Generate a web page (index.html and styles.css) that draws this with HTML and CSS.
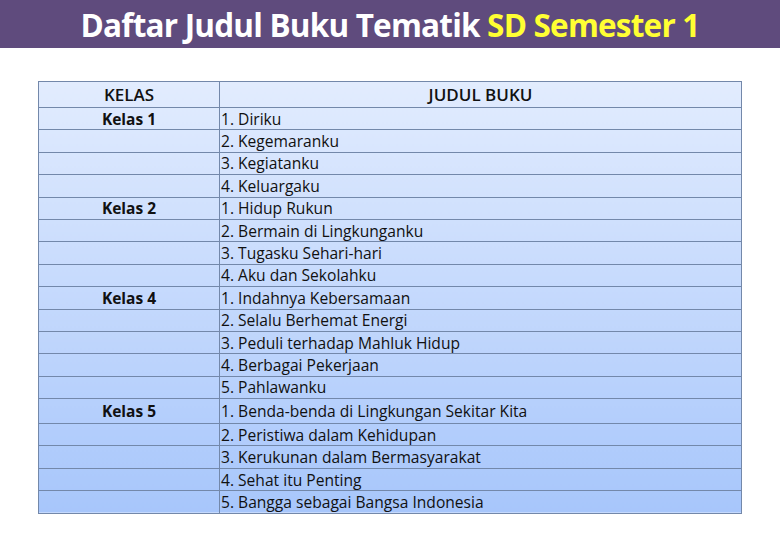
FILE: index.html
```html
<!DOCTYPE html>
<html>
<head>
<meta charset="utf-8">
<link rel="stylesheet" href="styles.css">
</head>
<body>
<header class="title-bar">
  <h1 class="title">Daftar Judul Buku Tematik <span class="accent">SD Semester 1</span></h1>
</header>
<main class="content">
  <table class="book-table">
    <thead>
      <tr class="head-row"><th class="col-kelas">KELAS</th><th class="col-judul">JUDUL BUKU</th></tr>
    </thead>
    <tbody>
      <tr><td class="kelas">Kelas 1</td><td>1. Diriku</td></tr>
      <tr><td class="kelas"></td><td>2. Kegemaranku</td></tr>
      <tr><td class="kelas"></td><td>3. Kegiatanku</td></tr>
      <tr><td class="kelas"></td><td>4. Keluargaku</td></tr>
      <tr><td class="kelas">Kelas 2</td><td>1. Hidup Rukun</td></tr>
      <tr><td class="kelas"></td><td>2. Bermain di Lingkunganku</td></tr>
      <tr><td class="kelas"></td><td>3. Tugasku Sehari-hari</td></tr>
      <tr><td class="kelas"></td><td>4. Aku dan Sekolahku</td></tr>
      <tr><td class="kelas">Kelas 4</td><td>1. Indahnya Kebersamaan</td></tr>
      <tr><td class="kelas"></td><td>2. Selalu Berhemat Energi</td></tr>
      <tr><td class="kelas"></td><td>3. Peduli terhadap Mahluk Hidup</td></tr>
      <tr><td class="kelas"></td><td>4. Berbagai Pekerjaan</td></tr>
      <tr><td class="kelas"></td><td>5. Pahlawanku</td></tr>
      <tr class="tall"><td class="kelas">Kelas 5</td><td>1. Benda-benda di Lingkungan Sekitar Kita</td></tr>
      <tr><td class="kelas"></td><td>2. Peristiwa dalam Kehidupan</td></tr>
      <tr><td class="kelas"></td><td>3. Kerukunan dalam Bermasyarakat</td></tr>
      <tr><td class="kelas"></td><td>4. Sehat itu Penting</td></tr>
      <tr><td class="kelas"></td><td>5. Bangga sebagai Bangsa Indonesia</td></tr>
    </tbody>
  </table>
</main>
</body>
</html>
```
FILE: styles.css
```css
html, body {
  margin: 0;
  padding: 0;
  background: #ffffff;
  font-family: "Open Sans", "Noto Sans", sans-serif;
}
.title-bar {
  height: 48px;
  background: #5f4b7d;
  display: flex;
  align-items: center;
  justify-content: center;
}
.title {
  margin: 0;
  padding-top: 1px;
  font-size: 31.5px;
  font-weight: 700;
  color: #ffffff;
  letter-spacing: -0.8px;
  line-height: 1;
}
.accent {
  color: #ffff33;
}
.content {
  padding: 33px 0 0 38px;
}
.book-table {
  border-collapse: collapse;
  width: 704px;
  background: linear-gradient(#e2ecfe, #a7c6fb);
  color: #111111;
  font-size: 15.6px;
  letter-spacing: 0;
}
.book-table th,
.book-table td {
  border: 1px solid #7388aa;
  padding: 0 1px;
  height: 21.4px;
  line-height: 16px;
  vertical-align: middle;
}
.head-row th {
  height: 25px;
  padding: 0;
  font-weight: 600;
  font-size: 17px;
  text-align: center;
}
.col-kelas {
  width: 180px;
}
.kelas {
  text-align: center;
  font-weight: 700;
  font-size: 15.5px;
}
.book-table tr.tall td {
  height: 24px;
}
```
